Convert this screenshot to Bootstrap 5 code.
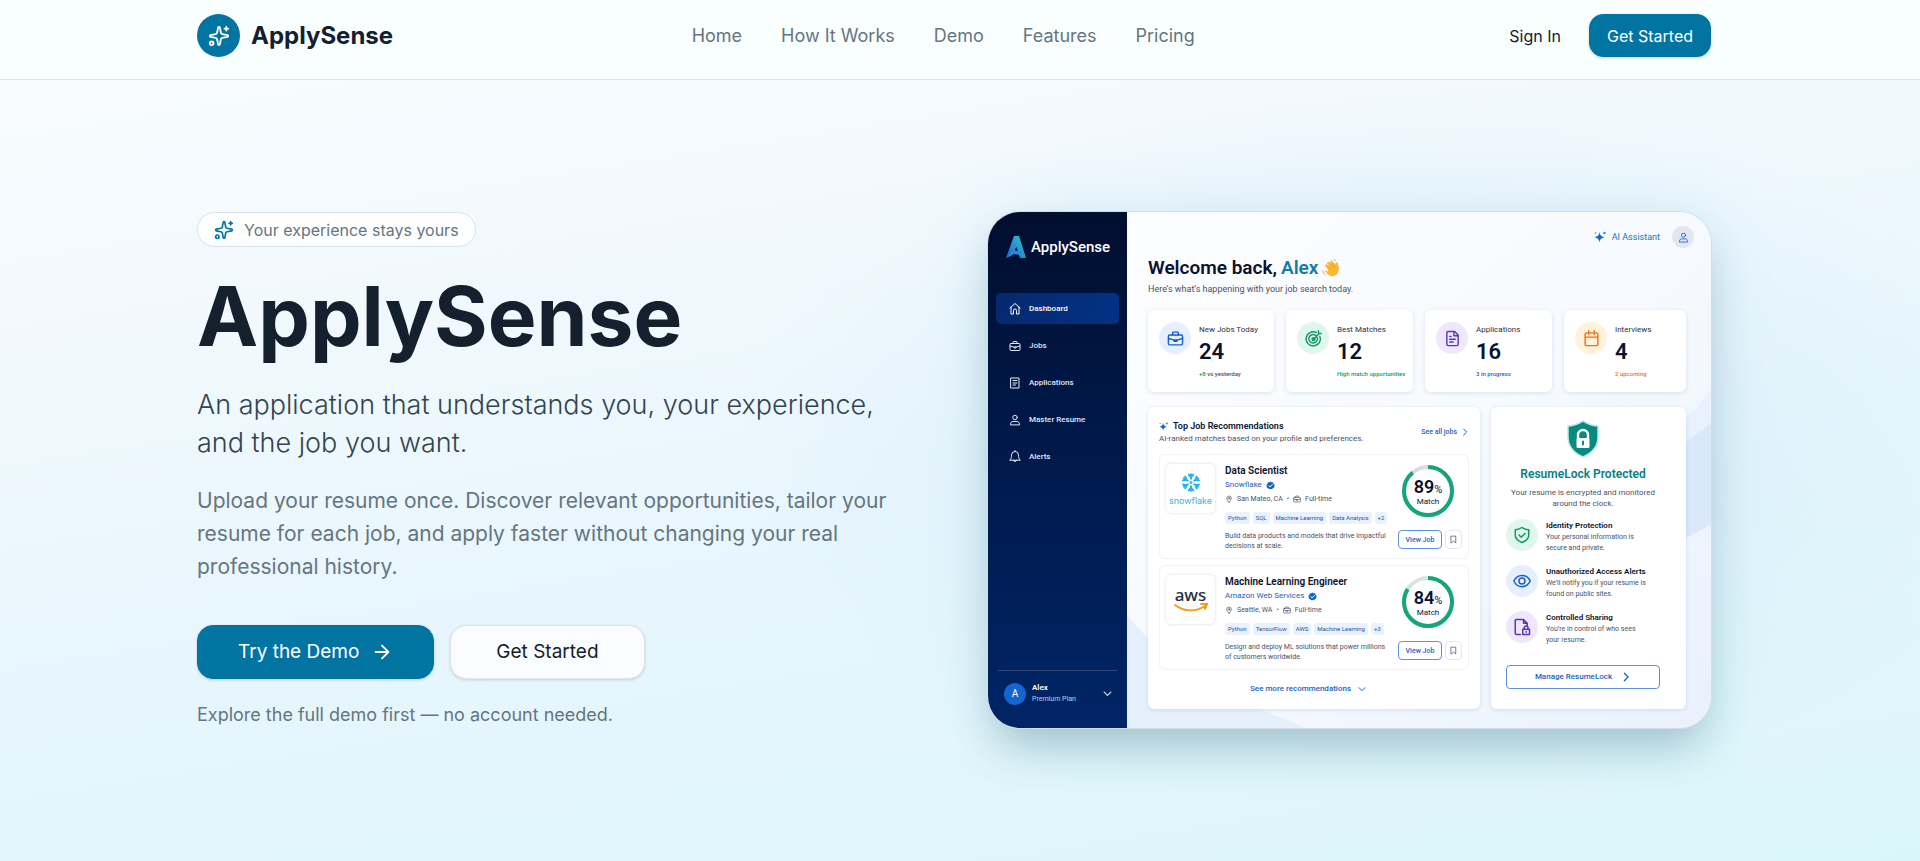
<!DOCTYPE html>
<html lang="en">
<head>
<meta charset="utf-8">
<meta name="viewport" content="width=device-width, initial-scale=1">
<title>ApplySense</title>
<link href="https://cdn.jsdelivr.net/npm/bootstrap@5.3.0/dist/css/bootstrap.min.css" rel="stylesheet">
<style>
  :root { --brand: #0274a2; --ink: #15202e; --muted: #66757f; --royal: #1a5fc0; --navy: #0a1230; }
  body { font-family: Inter, "Open Sans", sans-serif; color: var(--ink); min-height: 100vh;
    background: radial-gradient(ellipse 860px 480px at 72% 52%, rgba(205,231,247,.6), transparent 75%),
      linear-gradient(171deg, #fafdff 0%, #f4fafe 22%, #e7f6fd 60%, #dbf6fa 100%); }
  svg { flex-shrink: 0; }
  .line { fill: none; stroke: currentColor; stroke-width: 2; stroke-linecap: round; stroke-linejoin: round; }
  .shell { max-width: 1550px; padding: 0 24px 0 12px; margin: 0 auto; }

  .site-head { background: #f9fffe; border-bottom: 1px solid #dce8ec; padding: 14px 0 22px; }
  .brand-link { gap: 11px; }
  .brand-dot { width: 43px; height: 43px; background: var(--brand); }
  .brand-name { font-size: 24px; line-height: 32px; font-weight: 700; color: var(--ink); }
  .menu { gap: 39px; }
  .menu a { font-size: 18px; line-height: 28px; color: var(--muted); }
  .sign { font-size: 16px; line-height: 24px; color: var(--ink); }
  .btn-brand { --bs-btn-bg: var(--brand); --bs-btn-color: #fff; --bs-btn-hover-bg: #02648c; --bs-btn-hover-color: #fff;
    --bs-btn-border-color: var(--brand); box-shadow: 0 1px 3px rgba(2,60,90,.2); }
  .btn-head { width: 122px; height: 43px; border-radius: 14px; font-size: 16px; padding: 0; }

  .hero { padding: 132px 0 0; }
  .hero .row { --bs-gutter-x: 68px; }
  .pill { border: 1px solid #d8e2ea; background: #fdffff; height: 35px; padding: 0 16px; gap: 10px; font-size: 16px; color: var(--muted); }
  .pill svg { color: var(--brand); }
  h1 { font-size: 82px; line-height: 84px; font-weight: 700; margin: 28px 0 27px; }
  .tagline { font-size: 27px; line-height: 38px; font-weight: 300; color: #34444f; margin-bottom: 22px; }
  .pitch { font-size: 21px; line-height: 33px; color: var(--muted); margin-bottom: 42px; }
  .btn-big { height: 54px; border-radius: 16px; font-size: 19px; padding: 0 40px; }
  .btn-plain { background: #fafcff; border: 1px solid #dde4ea; color: var(--ink); box-shadow: 0 1px 3px rgba(20,50,70,.18); padding: 0 45px; }
  .note { font-size: 18px; line-height: 28px; color: var(--muted); margin: 22px 0 0; }

  .mock { font-family: Roboto, "Noto Sans", sans-serif; font-size: 8px; line-height: 12px; color: #4a5266;
    border-radius: 32px; box-shadow: 0 0 0 1px #d3dfe8, 0 26px 44px -8px rgba(40,90,110,.3), 0 0 60px rgba(150,205,225,.22); background: #f9fbff; }
  .mock a { text-decoration: none; color: var(--royal); }
  .side { width: 139px; background: linear-gradient(180deg, #010e2f, #00194a 45%, #002566); padding: 24px 8px 23px; color: #c3cde4; }
  .side-brand { font-size: 15px; line-height: 22px; font-weight: 500; color: #fff; gap: 5px; padding-left: 10px; margin-bottom: 35px; }
  .side-nav { gap: 6px; }
  .side-nav a { height: 31px; padding-left: 13px; gap: 8px; color: #dfe7f7; font-weight: 500; border-radius: 5px; }
  .side-nav a.on { background: linear-gradient(100deg, #05296f, #033185); color: #fff; }
  .me { border-top: 1px solid #33497c; padding: 11px 5px 0 6px; margin: 0 2px; gap: 6px; line-height: 11px; font-size: 7px; }
  .me b { font-size: 8px; }
  .me-dot { width: 22px; height: 22px; background: #1565d0; color: #fff; font-size: 10px; }
  .board { padding: 14px 25px 19px 21px; }
  .wash { inset: 0; width: 100%; height: 100%; }
  .user-row { gap: 8px; height: 22px; margin-right: -8px; }
  .user-row button { border: 0; background: none; padding: 0; font-size: 9px; color: #1676b4; gap: 6px; }
  .user-row .who { width: 22px; height: 22px; background: #e0e7f1; color: #2c6fca; margin-left: 4px; }
  h2 { font-size: 19px; line-height: 26px; font-weight: 600; color: var(--navy); margin: 7px 0 2px; gap: 4px; }
  h2 b { color: #137ba8; font-weight: 600; }
  .hello { font-size: 9px; margin-bottom: 15px; }
  .stats { display: grid; grid-template-columns: 126fr 127fr 127fr 122fr; gap: 12px; margin-bottom: 15px; }
  .tile { background: #fff; border-radius: 6px; box-shadow: 0 1px 4px rgba(40,70,120,.14); }
  .stat { padding: 12px 0 13px 11px; gap: 8px; }
  .disc { width: 32px; height: 32px; flex-shrink: 0; }
  .stat-label { padding-top: 2px; color: #2a3145; }
  .stat-num { font-size: 22px; line-height: 24px; font-weight: 600; color: var(--navy); margin: 4px 0 5px; }
  .stat-sub { font-size: 6px; line-height: 10px; white-space: nowrap; font-weight: 500; }
  .ink-green { color: #12986a; } .ink-blue { color: #1a5fc0; } .ink-orange { color: #ee6f15; }
  .blue { background: #e6effd; color: #1a5fc0; } .green { background: #dff7ec; color: #12986a; }
  .violet { background: #efe8fd; color: #5a35b8; } .amber { background: #fff1da; color: #ee6f15; }
  .panels { display: grid; grid-template-columns: 332fr 195fr; gap: 11px; }
  .recs { padding: 12px 11px 13px; }
  .all-jobs { font-size: 7px; }
  h3 { font-size: 9px; line-height: 14px; font-weight: 600; color: var(--navy); margin: 0; gap: 5px; }
  .job { border: 1px solid #f0f2f6; border-radius: 6px; padding: 9px 6px 7px; gap: 10px; }
  .job h3 { font-size: 10px; }
  .jobs { gap: 6px; margin: 9px 0 12px; }
  .logo { width: 49px; height: 49px; border-radius: 5px; background: #fff; box-shadow: 0 0 3px rgba(40,60,100,.2); flex-shrink: 0; }
  .logo-snow { font-family: Inter, sans-serif; font-size: 9px; line-height: 9px; color: #36b3e6; }
  .logo-aws { font-family: "Noto Sans", sans-serif; font-size: 17px; line-height: 17px; color: #252f3e; font-weight: 500; }
  .firm { margin-top: 1px; gap: 4px; color: var(--royal); }
  .place { margin-top: 2px; gap: 4px; font-size: 7px; }
  .tags { gap: 3px; margin: 7px 0; }
  .tags span { font-size: 6px; line-height: 12px; padding: 0 3px; background: #e9f2fe; color: #27549c; border-radius: 3px; white-space: nowrap; }
  .about { font-size: 7px; line-height: 10px; white-space: nowrap; }
  .score { width: 64px; gap: 12px; }
  .dial { width: 54px; height: 54px; margin-right: 4px; }
  .dial svg { overflow: visible; }
  .dial-text { inset: 0; color: var(--navy); line-height: 11px; padding-top: 3px; }
  .dial-text b { font-size: 18px; line-height: 16px; font-weight: 600; } .dial-text i { font-style: normal; font-size: 11px; }
  .mini { border: 1px solid #5d90da; border-radius: 4px; background: #fff; color: var(--royal); font-weight: 500; font-size: 8px; padding: 0; line-height: 12px; }
  .view { width: 44px; height: 19px; font-size: 7px; } .keep { width: 17px; height: 19px; border-color: #e3e7ee; color: #4a5266; }
  .more { line-height: 14px; font-size: 8px; gap: 7px; padding-right: 12px; }
  .vault { padding: 13px 26px 19px 15px; }
  .vault h3 { font-size: 12px; color: #087f83; margin: 9px 0 6px; white-space: nowrap; }
  .vault .lead-in { line-height: 11px; margin-bottom: 10px; text-align: center; white-space: nowrap; }
  .guards { gap: 11px; margin-bottom: 19px; }
  .guards > div { gap: 8px; }
  .guards p { font-size: 7px; line-height: 11px; margin: 0; padding-top: 1px; white-space: nowrap; }
  .guards b { font-size: 8px; font-weight: 600; color: var(--navy); }
  .manage { height: 24px; gap: 9px; font-size: 8px; }
</style>
</head>
<body>
<svg width="0" height="0" class="position-absolute" aria-hidden="true">
  <symbol id="sparkles" viewBox="0 0 24 24"><g class="line"><path d="M11.017 2.814a1 1 0 0 1 1.966 0l1.051 5.558a2 2 0 0 0 1.594 1.594l5.558 1.051a1 1 0 0 1 0 1.966l-5.558 1.051a2 2 0 0 0-1.594 1.594l-1.051 5.558a1 1 0 0 1-1.966 0l-1.051-5.558a2 2 0 0 0-1.594-1.594l-5.558-1.051a1 1 0 0 1 0-1.966l5.558-1.051a2 2 0 0 0 1.594-1.594z"/><path d="M20 2v4M22 4h-4"/><circle cx="4" cy="20" r="2"/></g></symbol>
  <symbol id="star" viewBox="0 0 24 24"><path fill="#1266cc" d="M11 2c1 7 4 9 10 10.500-6 1.500-9 3.500-10 10.500-1-7-4-9-10-10.500 6-1.500 9-3.500 10-10.500z"/><circle cx="21" cy="4" r="2.400" fill="#1b8bd0"/><circle cx="3" cy="4" r="1.600" fill="#1b8bd0"/></symbol>
  <symbol id="case" viewBox="0 0 24 24"><g class="line"><rect x="2" y="7" width="20" height="14" rx="2"/><path d="M8 7V4a1 1 0 0 1 1-1h6a1 1 0 0 1 1 1v3M2 12l7 2h6l7-2M10 14v2h4v-2"/></g></symbol>
  <symbol id="person" viewBox="0 0 24 24"><g class="line"><circle cx="12" cy="7" r="4.500"/><path d="M3 21c0-5 3-6 5-6h8c2 0 5 1 5 6z"/></g></symbol>
  <symbol id="down" viewBox="0 0 24 24"><path fill="none" stroke="currentColor" stroke-linecap="round" stroke-width="3" d="M3 8l9 9 9-9"/></symbol>
  <symbol id="next" viewBox="0 0 24 24"><path fill="none" stroke="currentColor" stroke-linecap="round" stroke-width="3" d="M8 3l9 9-9 9"/></symbol>
  <symbol id="pin" viewBox="0 0 24 24"><g class="line"><path d="M12 22c5-6 7-9 7-12a7 7 0 0 0-14 0c0 3 2 6 7 12z"/><circle cx="12" cy="10" r="2.500"/></g></symbol>
  <symbol id="tick" viewBox="0 0 24 24"><path fill="#1266cc" d="M12 1l3 2 4 0 1 4 3 3-1 3 0 4-4 2-2 3-4-1-4 1-2-3-4-2 0-4-1-3 3-3 1-4 4 0z"/><path d="M7 12l4 4 7-8" fill="none" stroke="#fff" stroke-width="2.500"/></symbol>
  <symbol id="mark-page" viewBox="0 0 24 24"><path class="line" d="M6 3h12v18l-6-5-6 5z"/></symbol>
</svg>

<header class="site-head">
  <div class="shell d-flex flex-wrap align-items-center justify-content-between">
    <a href="#" class="brand-link d-flex align-items-center text-decoration-none">
      <span class="brand-dot rounded-circle d-flex align-items-center justify-content-center text-white"><svg width="22" height="22"><use href="#sparkles"/></svg></span>
      <span class="brand-name">ApplySense</span>
    </a>
    <nav class="menu d-flex flex-wrap">
      <a class="text-decoration-none" href="#">Home</a><a class="text-decoration-none" href="#">How It Works</a><a class="text-decoration-none" href="#">Demo</a><a class="text-decoration-none" href="#">Features</a><a class="text-decoration-none" href="#">Pricing</a>
    </nav>
    <div class="d-flex align-items-center gap-2">
      <a class="sign text-decoration-none px-3 me-1" href="#">Sign In</a>
      <button type="button" class="btn btn-brand btn-head">Get Started</button>
    </div>
  </div>
</header>

<main class="hero">
  <div class="shell">
    <div class="row gy-5 mt-0">
      <section class="col-lg-6 mt-0">
        <div class="pill rounded-pill d-inline-flex align-items-center"><svg width="20" height="20"><use href="#sparkles"/></svg>Your experience stays yours</div>
        <h1>ApplySense</h1>
        <p class="tagline">An application that understands you, your experience, and the job you want.</p>
        <p class="pitch">Upload your resume once. Discover relevant opportunities, tailor your resume for each job, and apply faster without changing your real professional history.</p>
        <div class="d-flex flex-wrap gap-3">
          <button type="button" class="btn btn-brand btn-big d-flex align-items-center gap-2">Try the Demo
            <svg width="22" height="22" viewBox="0 0 24 24" class="ms-1"><path class="line" d="M5 12h14M12 5l7 7-7 7"/></svg></button>
          <button type="button" class="btn btn-big btn-plain">Get Started</button>
        </div>
        <p class="note">Explore the full demo first — no account needed.</p>
      </section>

      <section class="col-lg-6 mt-lg-0">
        <div class="mock d-flex overflow-hidden">
          <aside class="side d-flex flex-column">
            <div class="side-brand d-flex align-items-center">
              <svg width="20" height="22" viewBox="0 0 20 22"><defs><linearGradient id="lg" x1="1" y1="0" x2="0" y2="1"><stop offset="0" stop-color="#2fc9d0"/><stop offset="1" stop-color="#1c62d2"/></linearGradient></defs><path fill="url(#lg)" d="M8 0h5l7 22h-6l-3.500-11L6 19l-6 3z"/><path fill="#2b86dd" d="M0 22l8-8 8 2-2 3-6-1z"/></svg>ApplySense
            </div>
            <nav class="side-nav d-flex flex-column">
              <a href="#" class="on d-flex align-items-center"><svg width="12" height="13" viewBox="0 0 24 26"><path class="line" d="M2 12L12 3l10 9M4 10v14h5v-7a3 3 0 0 1 6 0v7h5V10"/></svg>Dashboard</a>
              <a href="#" class="d-flex align-items-center"><svg width="12" height="12"><use href="#case"/></svg>Jobs</a>
              <a href="#" class="d-flex align-items-center"><svg width="12" height="12" viewBox="0 0 24 24"><path class="line" d="M4 2h16v20H4zM8 7h8M8 12h8M8 16h5"/></svg>Applications</a>
              <a href="#" class="d-flex align-items-center"><svg width="12" height="12"><use href="#person"/></svg>Master Resume</a>
              <a href="#" class="d-flex align-items-center"><svg width="12" height="13" viewBox="0 0 24 26"><path class="line" d="M2 20c3-3 3-6 3-10a7 7 0 0 1 14 0c0 4 0 7 3 10zM9 20a3 3 0 0 0 6 0M12 3V1"/></svg>Alerts</a>
            </nav>
            <div class="me d-flex align-items-center mt-auto">
              <span class="me-dot rounded-circle d-flex align-items-center justify-content-center">A</span>
              <span class="flex-grow-1"><b class="fw-semibold text-white">Alex</b><br>Premium Plan</span>
              <svg width="9" height="9"><use href="#down"/></svg>
            </div>
          </aside>

          <div class="board flex-grow-1 position-relative">
            <svg class="wash position-absolute" viewBox="0 0 584 518" preserveAspectRatio="none" aria-hidden="true">
              <defs><linearGradient id="wg" x1="0" y1="0" x2="1" y2="1"><stop offset="0" stop-color="#fcfdff"/><stop offset=".5" stop-color="#f7fafe"/><stop offset="1" stop-color="#e9f1fd"/></linearGradient></defs>
              <path fill="url(#wg)" d="M0 0h584v518H0z"/><path fill="#e6f0fd" d="M0 405L60 470 180 518H0z"/><path fill="#e8f2fe" d="M520 250L584 180v34L500 270z"/><path fill="#d9e8fb" d="M520 260L584 212v102l-84 44z"/>
            </svg>
            <div class="position-relative">
              <div class="user-row d-flex align-items-center justify-content-end">
                <button type="button" class="d-flex align-items-center"><svg width="12" height="12"><use href="#star"/></svg>AI Assistant</button>
                <span class="who rounded-circle d-flex align-items-center justify-content-center"><svg width="11" height="11"><use href="#person"/></svg></span>
              </div>
              <h2 class="d-flex align-items-center">Welcome back, <b>Alex</b>
                <svg width="18" height="18" viewBox="0 0 24 24"><g stroke="#f9b934" stroke-width="3.600" stroke-linecap="round"><path d="M6 9l7 7M8.500 5.500l8 8M12.500 4l6 8M19.500 6.500l1.500 7"/></g><path fill="#f9b934" d="M7 10l12-2 3 4c1 6-3 11-8 11-4 0-8-4-10-7 1-2 2-1 4 1z"/><path d="M8 9l5 6M11 6l5 6M15 5l3 6" stroke="#d98a1b" fill="none" stroke-width=".8"/><path d="M1 15c0 3 2 5 4 6M15 1c2 0 3 1 4 2" stroke="#8a93a5" fill="none"/></svg></h2>
              <div class="hello">Here’s what’s happening with your job search today.</div>

              <div class="stats">
                <div class="tile stat d-flex"><span class="disc blue rounded-circle d-flex align-items-center justify-content-center"><svg width="17" height="17"><use href="#case"/></svg></span><div><div class="stat-label">New Jobs Today</div><div class="stat-num">24</div><div class="stat-sub"><span class="ink-green">+8</span> vs yesterday</div></div></div>
                <div class="tile stat d-flex"><span class="disc green rounded-circle d-flex align-items-center justify-content-center"><svg width="17" height="17" viewBox="0 0 24 24"><path class="line" d="M16 3.500A10 10 0 1 0 21 9M15 7.500A6 6 0 1 0 17 10M12 13l8-8M19 1v4h4"/><circle class="line" cx="12" cy="13" r="2"/></svg></span><div><div class="stat-label">Best Matches</div><div class="stat-num">12</div><div class="stat-sub ink-green">High match opportunities</div></div></div>
                <div class="tile stat d-flex"><span class="disc violet rounded-circle d-flex align-items-center justify-content-center"><svg width="17" height="17" viewBox="0 0 24 24"><path class="line" d="M4 4a2 2 0 0 1 2-2h9l5 5v13a2 2 0 0 1-2 2H6a2 2 0 0 1-2-2zM14 2v6h6M8 9h2M8 13h8M8 17h5"/></svg></span><div><div class="stat-label">Applications</div><div class="stat-num">16</div><div class="stat-sub ink-blue">3 in progress</div></div></div>
                <div class="tile stat d-flex"><span class="disc amber rounded-circle d-flex align-items-center justify-content-center"><svg width="17" height="17" viewBox="0 0 24 24"><path class="line" d="M3 6a2 2 0 0 1 2-2h14a2 2 0 0 1 2 2v14a2 2 0 0 1-2 2H5a2 2 0 0 1-2-2zM3 10h18M8 1v5M16 1v5"/></svg></span><div><div class="stat-label">Interviews</div><div class="stat-num">4</div><div class="stat-sub ink-orange">2 upcoming</div></div></div>
              </div>

              <div class="panels">
                <section class="tile recs">
                  <div class="d-flex align-items-center justify-content-between">
                    <div><h3 class="d-flex align-items-center"><svg width="9" height="9"><use href="#star"/></svg>Top Job Recommendations</h3><div>AI-ranked matches based on your profile and preferences.</div></div>
                    <a href="#" class="all-jobs d-flex align-items-center gap-1 fw-medium">See all jobs <svg width="8" height="8"><use href="#next"/></svg></a>
                  </div>
                  <div class="jobs d-flex flex-column">
                    <article class="job d-flex">
                      <div class="logo d-flex flex-column align-items-center justify-content-center">
                        <svg width="18" height="19" viewBox="0 0 24 24" fill="none" stroke="#27b1ea" stroke-width="2.600" stroke-linecap="round" stroke-linejoin="round"><g id="arm"><path d="M9 1.500L12 5l3-3.500M12 1v6"/></g><use href="#arm" transform="rotate(60 12 12)"/><use href="#arm" transform="rotate(120 12 12)"/><use href="#arm" transform="rotate(180 12 12)"/><use href="#arm" transform="rotate(240 12 12)"/><use href="#arm" transform="rotate(300 12 12)"/><path stroke-width="1.500" d="M12 10.500l1.500 1.500-1.500 1.500-1.500-1.500z"/></svg>
                        <span class="logo-snow mt-1">snowflake</span>
                      </div>
                      <div class="flex-grow-1">
                        <h3>Data Scientist</h3>
                        <div class="firm d-flex align-items-center">Snowflake <svg width="9" height="9"><use href="#tick"/></svg></div>
                        <div class="place d-flex align-items-center"><svg width="8" height="8"><use href="#pin"/></svg>San Mateo, CA <span>•</span> <svg width="8" height="8"><use href="#case"/></svg>Full-time</div>
                        <div class="tags d-flex"><span>Python</span><span>SQL</span><span>Machine Learning</span><span>Data Analysis</span><span>+2</span></div>
                        <div class="about">Build data products and models that drive impactful<br>decisions at scale.</div>
                      </div>
                      <div class="score d-flex flex-column align-items-center">
                        <div class="dial position-relative"><svg width="54" height="54" viewBox="0 0 54 54" fill="none" stroke-width="4"><circle cx="27" cy="27" r="24" stroke="#d8dde2"/><circle cx="27" cy="27" r="24" stroke="#16a57b" pathLength="100" stroke-dasharray="89 11" transform="rotate(-90 27 27)"/></svg>
                          <div class="dial-text position-absolute d-flex flex-column align-items-center justify-content-center"><span><b>89</b><i>%</i></span>Match</div></div>
                        <div class="d-flex justify-content-between w-100"><button type="button" class="mini view">View Job</button><button type="button" class="mini keep" aria-label="Save job"><svg width="9" height="9"><use href="#mark-page"/></svg></button></div>
                      </div>
                    </article>
                    <article class="job d-flex">
                      <div class="logo d-flex flex-column align-items-center justify-content-center">
                        <span class="logo-aws">aws</span>
                        <svg width="34" height="10" viewBox="0 0 34 10" fill="none" stroke="#f59b1c" stroke-width="2" stroke-linecap="round"><path d="M1 2c9 7 21 7 30 1M27 1l6 0-2 5"/></svg>
                      </div>
                      <div class="flex-grow-1">
                        <h3>Machine Learning Engineer</h3>
                        <div class="firm d-flex align-items-center">Amazon Web Services <svg width="9" height="9"><use href="#tick"/></svg></div>
                        <div class="place d-flex align-items-center"><svg width="8" height="8"><use href="#pin"/></svg>Seattle, WA <span>•</span> <svg width="8" height="8"><use href="#case"/></svg>Full-time</div>
                        <div class="tags d-flex"><span>Python</span><span>TensorFlow</span><span>AWS</span><span>Machine Learning</span><span>+3</span></div>
                        <div class="about">Design and deploy ML solutions that power millions<br>of customers worldwide.</div>
                      </div>
                      <div class="score d-flex flex-column align-items-center">
                        <div class="dial position-relative"><svg width="54" height="54" viewBox="0 0 54 54" fill="none" stroke-width="4"><circle cx="27" cy="27" r="24" stroke="#d8e4e0"/><circle cx="27" cy="27" r="24" stroke="#16a57b" pathLength="100" stroke-dasharray="84 16" transform="rotate(-90 27 27)"/></svg>
                          <div class="dial-text position-absolute d-flex flex-column align-items-center justify-content-center"><span><b>84</b><i>%</i></span>Match</div></div>
                        <div class="d-flex justify-content-between w-100"><button type="button" class="mini view">View Job</button><button type="button" class="mini keep" aria-label="Save job"><svg width="9" height="9"><use href="#mark-page"/></svg></button></div>
                      </div>
                    </article>
                  </div>
                  <a href="#" class="more d-flex align-items-center justify-content-center fw-medium">See more recommendations <svg width="8" height="8"><use href="#down"/></svg></a>
                </section>

                <section class="tile vault d-flex flex-column align-items-center">
                  <svg width="34" height="38" viewBox="0 0 34 38"><path d="M17 1c5 3 10 5 15 5v11c0 10-6 16-15 20C8 33 2 27 2 17V6c5 0 10-2 15-5z" fill="#078a80" stroke="#bfe9df" stroke-width="1.500"/><path d="M12 19v-4a5 5 0 0 1 10 0v4" fill="none" stroke="#fff" stroke-width="2.400"/><rect x="10.500" y="18" width="13" height="10" rx="1.500" fill="#fff"/><path d="M17 21.500v3" stroke="#078a80" stroke-width="2" stroke-linecap="round"/></svg>
                  <h3>ResumeLock Protected</h3>
                  <div class="lead-in">Your resume is encrypted and monitored<br>around the clock.</div>
                  <div class="guards d-flex flex-column w-100">
                    <div class="d-flex align-items-start"><span class="disc green rounded-circle d-flex align-items-center justify-content-center"><svg width="18" height="18" viewBox="0 0 24 24"><path class="line" d="M12 2c3 2 6 3 9 3v7c0 5-4 8-9 10-5-2-9-5-9-10V5c3 0 6-1 9-3zM8 12l3 3 5-5"/></svg></span><p><b>Identity Protection</b><br>Your personal information is<br>secure and private.</p></div>
                    <div class="d-flex align-items-start"><span class="disc blue rounded-circle d-flex align-items-center justify-content-center"><svg width="18" height="18" viewBox="0 0 24 24"><path class="line" d="M1 12c5-10 17-10 22 0-5 10-17 10-22 0z"/><circle class="line" cx="12" cy="12" r="4"/></svg></span><p><b>Unauthorized Access Alerts</b><br>We’ll notify you if your resume is<br>found on public sites.</p></div>
                    <div class="d-flex align-items-start"><span class="disc violet rounded-circle d-flex align-items-center justify-content-center"><svg width="18" height="18" viewBox="0 0 24 24"><path class="line" d="M10 22H5a2 2 0 0 1-2-2V3a1 1 0 0 1 1-1h10l5 5v3M14 2v5h5"/><path class="line" d="M13 15h9v7h-9zM15 15v-2a2.500 2.500 0 0 1 5 0v2M17.500 18v1"/></svg></span><p><b>Controlled Sharing</b><br>You’re in control of who sees<br>your resume.</p></div>
                  </div>
                  <button type="button" class="mini manage w-100 d-flex align-items-center justify-content-center">Manage ResumeLock <svg width="10" height="10"><use href="#next"/></svg></button>
                </section>
              </div>
            </div>
          </div>
        </div>
      </section>
    </div>
  </div>
</main>
<script src="https://cdn.jsdelivr.net/npm/bootstrap@5.3.0/dist/js/bootstrap.bundle.min.js"></script>
</body>
</html>
